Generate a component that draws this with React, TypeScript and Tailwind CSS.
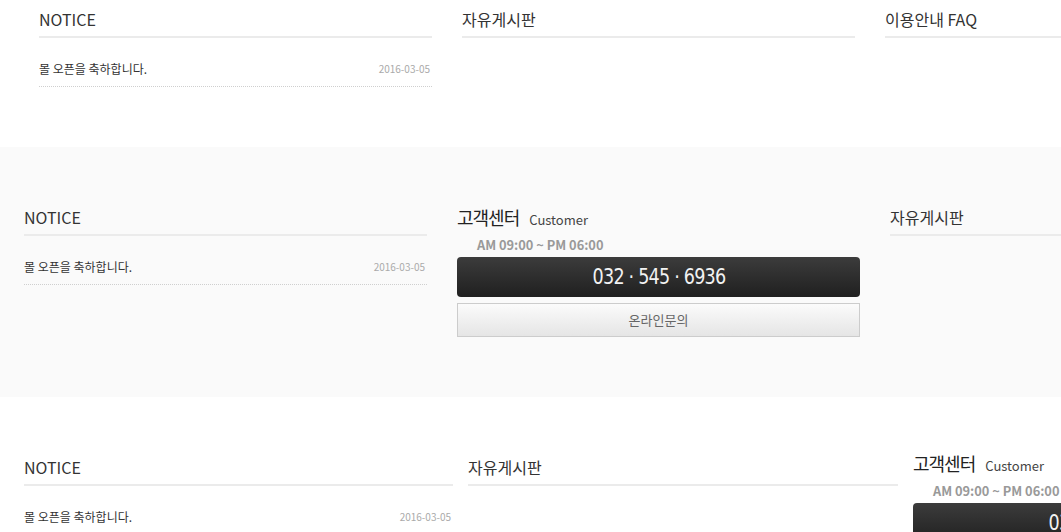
import React from 'react';

const font = { fontFamily: '"Noto Sans CJK KR", "Noto Sans", sans-serif' };

function BoardTitle({ title }: { title: string }) {
  return (
    <div className="border-b-2 border-[#ebebeb] pt-[8px] pb-[6px] text-[16px] leading-[22px] text-[#333]">
      {title}
    </div>
  );
}

function Board({ title, withItem = true }: { title: string; withItem?: boolean }) {
  return (
    <div>
      <BoardTitle title={title} />
      {withItem && (
        <div className="mt-[20px] flex items-start justify-between border-b border-dotted border-[#cfcfcf] pb-[6px]">
          <span className="text-[12px] leading-[22px] text-[#333]">몰 오픈을 축하합니다.</span>
          <span className="pr-[2px] text-[10px] leading-[22px] text-[#aaa]">2016-03-05</span>
        </div>
      )}
    </div>
  );
}

function Customer() {
  return (
    <div>
      <div className="flex items-baseline gap-[10px] pt-[7px]">
        <span className="text-[18px] leading-[24px] tracking-[-1px] text-[#222]">고객센터</span>
        <span className="text-[13px] text-[#444]">Customer</span>
      </div>
      <div className="mt-[7px] pl-[20px] text-[12.8px] font-bold leading-[16px] text-[#999]">
        AM 09:00 ~ PM 06:00
      </div>
      <div className="mt-[4px] flex h-[40px] items-center justify-center rounded-[4px] bg-gradient-to-b from-[#3c3c3c] to-[#202020] text-[#f2f2f2]">
        <span
          className="inline-block text-[22px] tracking-[-1px] [transform:scaleX(0.8)]"
          style={{ fontFamily: '"DejaVu Sans", sans-serif' }}
        >
          032 · 545 · 6936
        </span>
      </div>
      <div className="mt-[6px] flex h-[34px] items-center justify-center border border-[#cccccc] bg-gradient-to-b from-[#fbfbfb] to-[#e5e5e5] text-[13px] text-[#666]">
        온라인문의
      </div>
    </div>
  );
}

export default function App() {
  return (
    <div className="w-[1061px] overflow-hidden bg-white" style={font}>
      {/* 1단 */}
      <section className="h-[147px] bg-white pl-[39px]">
        <div className="flex gap-[30px]">
          <div className="w-[393px] shrink-0"><Board title="NOTICE" /></div>
          <div className="w-[393px] shrink-0"><Board title="자유게시판" withItem={false} /></div>
          <div className="w-[393px] shrink-0"><Board title="이용안내 FAQ" withItem={false} /></div>
        </div>
      </section>

      {/* 2단 */}
      <section className="h-[250px] bg-[#fafafa] pl-[24px] pt-[51px]">
        <div className="flex gap-[30px]">
          <div className="w-[403px] shrink-0"><Board title="NOTICE" /></div>
          <div className="w-[403px] shrink-0"><Customer /></div>
          <div className="w-[403px] shrink-0"><Board title="자유게시판" withItem={false} /></div>
        </div>
      </section>

      {/* 3단 */}
      <section className="h-[135px] bg-white pl-[24px] pt-[51px]">
        <div className="flex gap-[15px]">
          <div className="w-[429px] shrink-0"><Board title="NOTICE" /></div>
          <div className="w-[430px] shrink-0"><Board title="자유게시판" withItem={false} /></div>
          <div className="-mt-[4px] w-[403px] shrink-0"><Customer /></div>
        </div>
      </section>
    </div>
  );
}
